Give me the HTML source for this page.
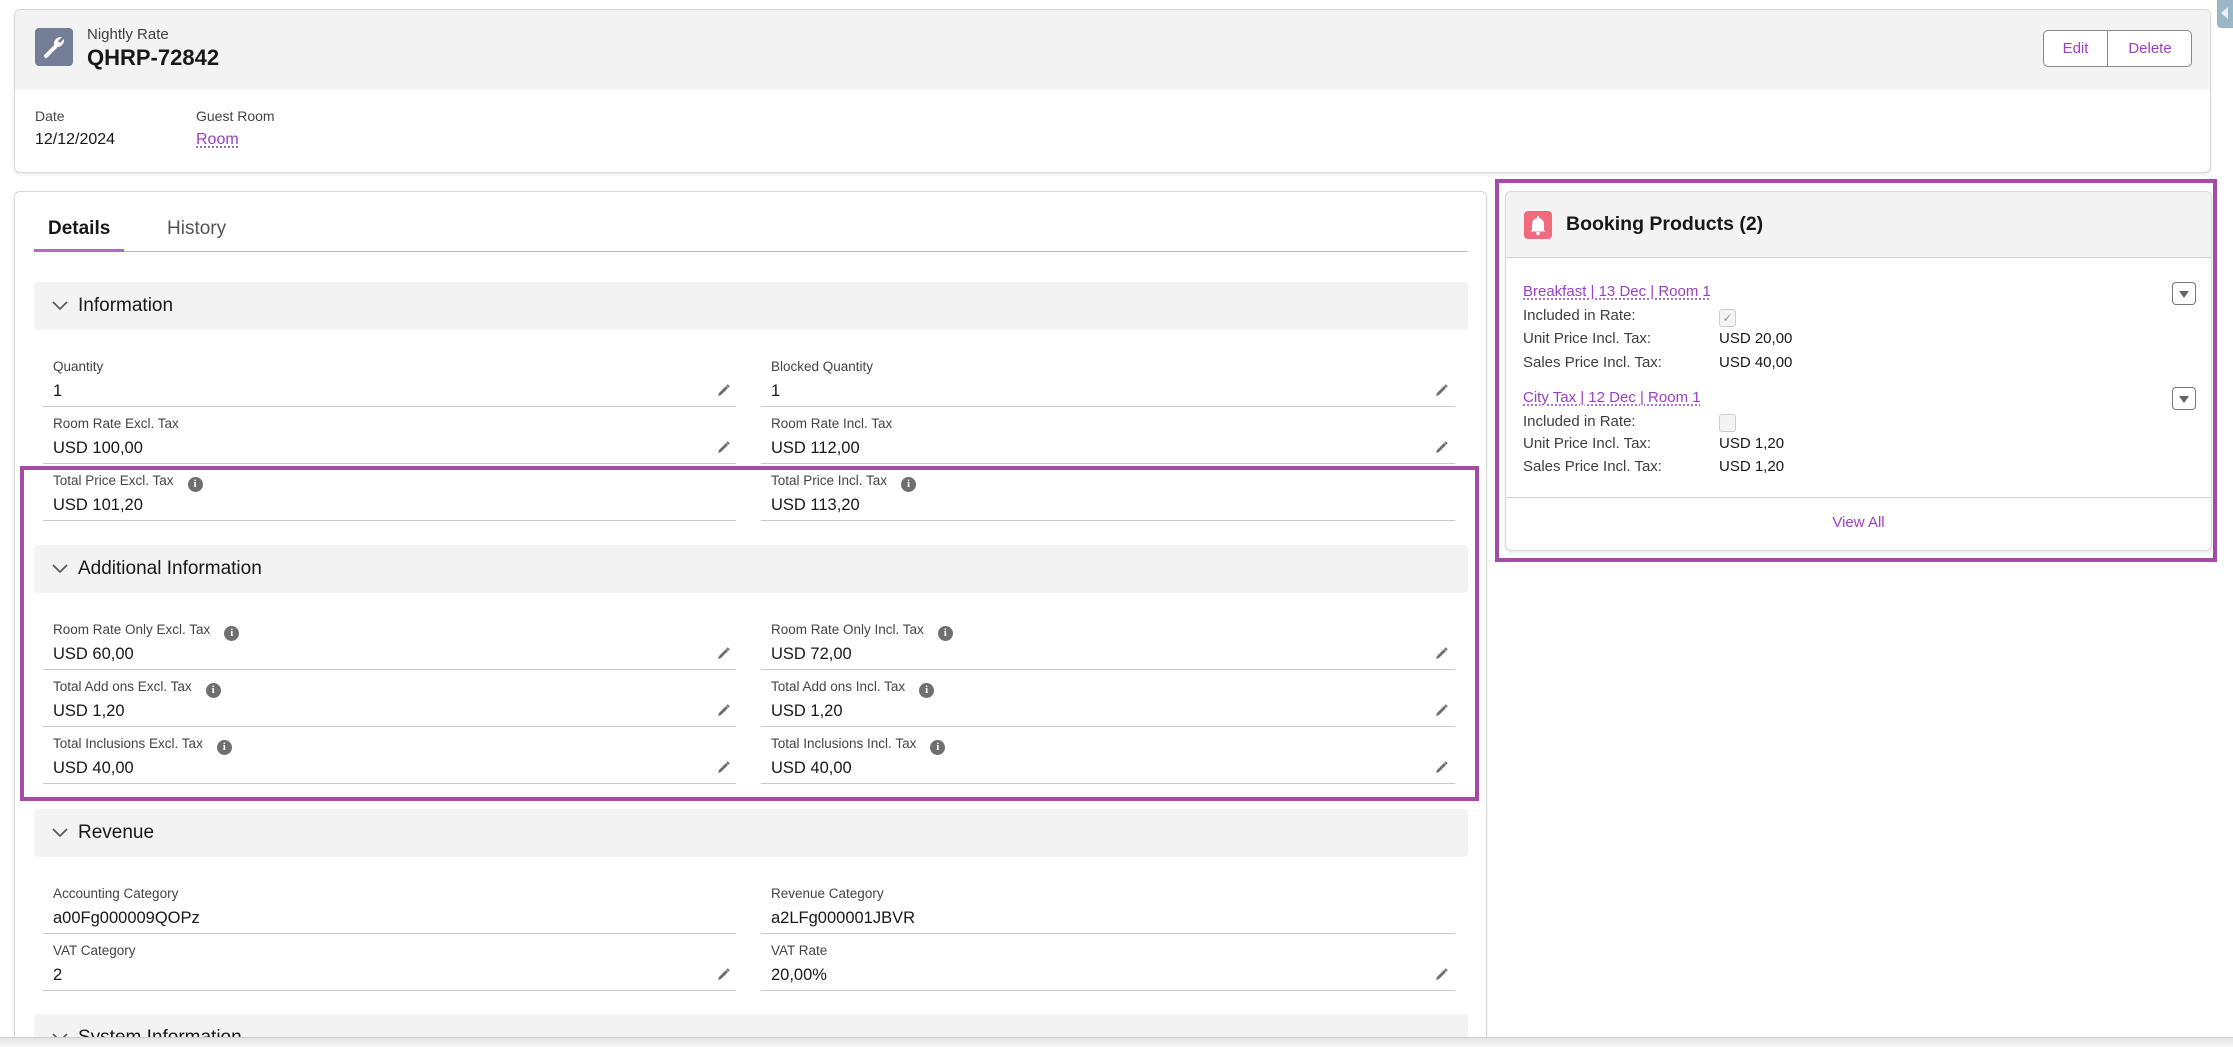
<!DOCTYPE html>
<html><head><meta charset="utf-8"><style>
*{box-sizing:border-box;margin:0;padding:0}
html,body{width:2233px;height:1047px;overflow:hidden}
body{background:#fff;font-family:"Liberation Sans",sans-serif;color:#181818;position:relative}
#wrap{position:absolute;left:0;top:0;width:2233px;height:1047px;overflow:hidden}
.a{position:absolute}
.card{position:absolute;background:#fff;border:1px solid #d8d8d8;border-radius:6px;box-shadow:0 2px 3px rgba(0,0,0,.08)}
.sec{position:absolute;left:34px;width:1434px;height:48px;background:#f3f3f3;border-radius:4px;font-size:19px;line-height:48px;padding-left:44px;overflow:hidden}
.sec .chev{position:absolute;left:18px;top:19px;width:16px;height:10px}
.f{position:absolute;height:56px;border-bottom:1px solid #c9c9c9}
.f .l{position:absolute;left:10px;top:6px;font-size:13.5px;color:#444;line-height:20px;white-space:nowrap}
.f .v{position:absolute;left:10px;top:29px;font-size:16.5px;line-height:22px;white-space:nowrap}
.f .p{position:absolute;top:32px;width:16px;height:16px}
.info{display:inline-block;width:15px;height:15px;border-radius:50%;background:#6f6f6f;color:#fff;font-size:11px;font-weight:bold;line-height:15px;text-align:center;margin-left:14px;vertical-align:-2px;font-family:"Liberation Serif",serif}
.lc{left:43px;width:693px}
.rc{left:761px;width:694px}
.lnk{color:#9b3fc6;text-decoration:underline dotted;text-underline-offset:3px}
.bp{position:absolute;left:1523px;font-size:15px;color:#3e3e3e;line-height:20px}
.bv{position:absolute;left:1719px;font-size:15px;line-height:20px}
.dd{position:absolute;left:2172px;width:24px;height:23px;border:1px solid #777;border-radius:4px;background:#fff}
.dd:after{content:"";position:absolute;left:6px;top:8px;border-left:5px solid transparent;border-right:5px solid transparent;border-top:7px solid #666}
</style></head><body><div id="wrap">
<svg width="0" height="0" style="position:absolute"><defs>
<symbol id="pen" viewBox="0 0 16 16"><path d="M3 13 L4 10 L11 3 L13 5 L6 12 Z" fill="#6e6e6e"/><path d="M12 2 L14 4" stroke="#6e6e6e" stroke-width="2"/></symbol>
<symbol id="chev" viewBox="0 0 16 10"><path d="M1 1 L8 8 L15 1" fill="none" stroke="#555" stroke-width="1.6"/></symbol>
</defs></svg>

<div class="card" style="left:14px;top:9px;width:2197px;height:164px;overflow:hidden">
  <div class="a" style="left:0;top:0;width:100%;height:80px;background:#f3f3f3"></div>
  <div class="a" style="left:20px;top:18px;width:38px;height:38px;background:#747e96;border-radius:4px">
    <svg width="38" height="38" viewBox="0 0 38 38"><path d="M11 28 L20 19" stroke="#fff" stroke-width="4" stroke-linecap="round"/><path d="M19 17 A7 7 0 0 1 27 9 L23 13 L25 15 L29 11 A7 7 0 0 1 21 19 Z" fill="#fff"/></svg>
  </div>
  <div class="a" style="left:72px;top:16px;font-size:15px;color:#3e3e3e">Nightly Rate</div>
  <div class="a" style="left:72px;top:35px;font-size:22px;font-weight:bold">QHRP-72842</div>
  <div class="a" style="left:2028px;top:20px;width:149px;height:37px;border:1px solid #8a8a8a;border-radius:5px;background:#fff;font-size:15px;color:#9b3fc6">
    <div class="a" style="left:0;width:63px;top:0;line-height:35px;text-align:center">Edit</div>
    <div class="a" style="left:63px;top:0;width:1px;height:35px;background:#8a8a8a"></div>
    <div class="a" style="left:64px;width:84px;top:0;line-height:35px;text-align:center">Delete</div>
  </div>
  <div class="a" style="left:20px;top:98px;font-size:14px;color:#444">Date</div>
  <div class="a" style="left:20px;top:121px;font-size:16px">12/12/2024</div>
  <div class="a" style="left:181px;top:98px;font-size:14px;color:#444">Guest Room</div>
  <div class="a lnk" style="left:181px;top:121px;font-size:16px">Room</div>
</div>

<div class="card" style="left:14px;top:191px;width:1473px;height:856px;border-bottom:none;border-radius:6px 6px 0 0"></div>
<div class="a" style="left:48px;top:218px;font-size:19px;font-weight:bold">Details</div>
<div class="a" style="left:167px;top:218px;font-size:19px;color:#555">History</div>
<div class="a" style="left:34px;top:251px;width:1434px;height:1px;background:#bbb"></div>
<div class="a" style="left:34px;top:249px;width:90px;height:3px;background:#b068c9"></div>

<div class="sec" style="top:282px"><svg class="chev"><use href="#chev"/></svg>Information</div>
<div class="f lc" style="top:351px"><div class="l">Quantity</div><div class="v">1</div><svg class="p" style="left:672px"><use href="#pen"/></svg></div>
<div class="f rc" style="top:351px"><div class="l">Blocked Quantity</div><div class="v">1</div><svg class="p" style="left:672px"><use href="#pen"/></svg></div>
<div class="f lc" style="top:408px"><div class="l">Room Rate Excl. Tax</div><div class="v">USD 100,00</div><svg class="p" style="left:672px"><use href="#pen"/></svg></div>
<div class="f rc" style="top:408px"><div class="l">Room Rate Incl. Tax</div><div class="v">USD 112,00</div><svg class="p" style="left:672px"><use href="#pen"/></svg></div>
<div class="f lc" style="top:465px"><div class="l">Total Price Excl. Tax<span class="info">i</span></div><div class="v">USD 101,20</div></div>
<div class="f rc" style="top:465px"><div class="l">Total Price Incl. Tax<span class="info">i</span></div><div class="v">USD 113,20</div></div>

<div class="sec" style="top:545px"><svg class="chev"><use href="#chev"/></svg>Additional Information</div>
<div class="f lc" style="top:614px"><div class="l">Room Rate Only Excl. Tax<span class="info">i</span></div><div class="v">USD 60,00</div><svg class="p" style="left:672px"><use href="#pen"/></svg></div>
<div class="f rc" style="top:614px"><div class="l">Room Rate Only Incl. Tax<span class="info">i</span></div><div class="v">USD 72,00</div><svg class="p" style="left:672px"><use href="#pen"/></svg></div>
<div class="f lc" style="top:671px"><div class="l">Total Add ons Excl. Tax<span class="info">i</span></div><div class="v">USD 1,20</div><svg class="p" style="left:672px"><use href="#pen"/></svg></div>
<div class="f rc" style="top:671px"><div class="l">Total Add ons Incl. Tax<span class="info">i</span></div><div class="v">USD 1,20</div><svg class="p" style="left:672px"><use href="#pen"/></svg></div>
<div class="f lc" style="top:728px"><div class="l">Total Inclusions Excl. Tax<span class="info">i</span></div><div class="v">USD 40,00</div><svg class="p" style="left:672px"><use href="#pen"/></svg></div>
<div class="f rc" style="top:728px"><div class="l">Total Inclusions Incl. Tax<span class="info">i</span></div><div class="v">USD 40,00</div><svg class="p" style="left:672px"><use href="#pen"/></svg></div>

<div class="sec" style="top:809px"><svg class="chev"><use href="#chev"/></svg>Revenue</div>
<div class="f lc" style="top:878px"><div class="l">Accounting Category</div><div class="v">a00Fg000009QOPz</div></div>
<div class="f rc" style="top:878px"><div class="l">Revenue Category</div><div class="v">a2LFg000001JBVR</div></div>
<div class="f lc" style="top:935px"><div class="l">VAT Category</div><div class="v">2</div><svg class="p" style="left:672px"><use href="#pen"/></svg></div>
<div class="f rc" style="top:935px"><div class="l">VAT Rate</div><div class="v">20,00%</div><svg class="p" style="left:672px"><use href="#pen"/></svg></div>
<div class="sec" style="top:1014px;height:23px;border-radius:4px 4px 0 0"><svg class="chev"><use href="#chev"/></svg>System Information</div>

<div class="a" style="left:20px;top:466px;width:1459px;height:335px;border:4px solid #a44ca5"></div>

<div class="card" style="left:1505px;top:191px;width:707px;height:360px;overflow:hidden">
  <div class="a" style="left:0;top:0;width:100%;height:66px;background:#f3f3f3;border-bottom:1px solid #d0d0d0"></div>
  <div class="a" style="left:0;top:305px;width:100%;height:1px;background:#d0d0d0"></div>
  <div class="a" style="left:0;top:322px;width:100%;text-align:center;font-size:15px;color:#9b3fc6">View All</div>
</div>
<div class="a" style="left:1524px;top:211px;width:28px;height:28px;background:#f0697c;border-radius:4px">
  <svg width="28" height="28" viewBox="0 0 28 28"><path d="M8 19 L8 13 A6 6 0 0 1 20 13 L20 19 L21.5 20.5 L6.5 20.5 Z" fill="#fff"/><circle cx="14" cy="22.5" r="1.8" fill="#fff"/><rect x="13" y="5" width="2" height="3" fill="#fff"/></svg>
</div>
<div class="a" style="left:1566px;top:213px;font-size:19.5px;font-weight:bold">Booking Products (2)</div>
<div class="a lnk" style="left:1523px;top:283px;font-size:15px">Breakfast | 13 Dec | Room 1</div>
<div class="dd" style="top:282px"></div>
<div class="bp" style="top:306px">Included in Rate:</div>
<div class="a" style="left:1719px;top:309px;width:17px;height:18px;border:1px solid #ccc;border-radius:3px;background:#f3f3f3;font-size:12px;color:#999;text-align:center;line-height:16px">✓</div>
<div class="bp" style="top:329px">Unit Price Incl. Tax:</div><div class="bv" style="top:329px">USD 20,00</div>
<div class="bp" style="top:353px">Sales Price Incl. Tax:</div><div class="bv" style="top:353px">USD 40,00</div>
<div class="a lnk" style="left:1523px;top:389px;font-size:15px">City Tax | 12 Dec | Room 1</div>
<div class="dd" style="top:387px"></div>
<div class="bp" style="top:412px">Included in Rate:</div>
<div class="a" style="left:1719px;top:414px;width:17px;height:18px;border:1px solid #ccc;border-radius:3px;background:#f3f3f3"></div>
<div class="bp" style="top:434px">Unit Price Incl. Tax:</div><div class="bv" style="top:434px">USD 1,20</div>
<div class="bp" style="top:457px">Sales Price Incl. Tax:</div><div class="bv" style="top:457px">USD 1,20</div>
<div class="a" style="left:1495px;top:179px;width:722px;height:383px;border:4px solid #a44ca5"></div>

<div class="a" style="left:2217px;top:0;width:16px;height:28px;background:#9bb7c7;border-radius:0 0 0 4px">
  <div class="a" style="left:4px;top:7px;border-top:6px solid transparent;border-bottom:6px solid transparent;border-right:7px solid #eef"></div>
</div>
<div class="a" style="left:0;top:1037px;width:2233px;height:10px;background:linear-gradient(#e4e4e4,#f7f7f7);border-top:1px solid #cfcfcf;z-index:10"></div>
</div></body></html>
